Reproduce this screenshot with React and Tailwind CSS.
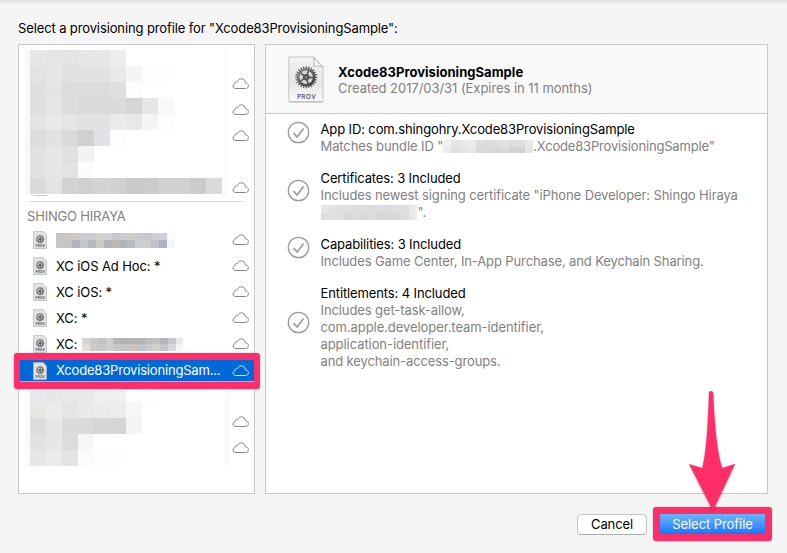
import React from "react";

const upperMosaic = [
  ["#e7e7e7", "#e5e5e5", "#e4e4e4", "#e6e6e6", "#e7e7e7", "#ededed"],
  ["#e3e3e3", "#e6e6e6", "#e1e1e1", "#e2e2e2", "#e2e2e2", "#e9e9e9", "#f5f5f5", "#fefefe", "#fefefe"],
  ["#dfdfdf", "#e4e4e4", "#dcdcdc", "#dcdcdb", "#dcdcdb", "#dfdfdf", "#fcfefe"],
  ["#dfdfdf", "#e5e5e5", "#dcdcdc", "#dadad9", "#dadad8", "#dbdbdb", "#d5d5d5", "#e6e6e6", "#f8fafa"],
  ["#e4e4e4", "#e9e9e9", "#e5e5e5", "#e2e2e2", "#e2e2e2", "#eaeae8", "#e8e8e8", "#f4f4f4", "#fdfdfd"],
  ["#dddddd", "#e2e2e0", "#d9d9d9", "#d0d0cf", "#e0e2e5", "#fdfdfd"],
  ["#e2e2e2", "#e6e6e6", "#e0e0e0", "#f2f2f2"],
  ["#e0e3e3", "#e7e7e7", "#e3e3e3", "#fcfcfc"],
  ["#dbdbdb", "#e4e4e1", "#d2d2d2", "#d0d0d0", "#d3d3d5", "#d1d1d1", "#cacaca", "#cbcbc9", "#d1d1d1", "#d1d1d1", "#cccccc", "#dbdbdb"],
];

const lowerMosaic = [
  ["#e8e9ee", "#e7e7e5", "#e9e9e9", "#e9e9e9", "#efefef", "#f0f0f0", "#fefefe", "#fdfdfd"],
  ["#e8e7e6", "#ebebea", "#e5e5e5", "#e9e9e9", "#ebebeb", "#ededed", "#f7f7f7"],
  ["#dddddd", "#e6e6e6", "#dbdbdb", "#dadad8", "#d6d6d6", "#d5d5d7", "#f4f4f4"],
  ["#e0e3e3", "#e7e7e7", "#dcdcdc", "#f6f6f6"],
  ["#e6e6e6", "#ebebeb", "#e4e4e4", "#fbfbfb", "#fefefe", "#fefefe"],
];

const nameBlur = [
  ["#c6c4c4", "#cbc8c7", "#cfc9c7", "#cccdd1", "#cdced2", "#d3d1ce", "#cfd1d4", "#c4c6ca", "#c9cbcd", "#cfcbc7", "#c8cacc", "#c6c8cd", "#cdced0", "#ced1d8", "#fafafd"],
  ["#c9c5c4", "#c5c5c6", "#b4b5ba", "#c4c6c8", "#b6b8bc", "#cac9c7", "#b2b4b7", "#bbb8b5", "#b2b4b8", "#b8bbbf", "#cccfd2", "#d0cfcd", "#c0c2c7", "#b0b2bb", "#f5f6fb"],
];
const xcBlur = [
  ["#d6d5d3", "#c8c9cc", "#c0c2c7", "#cfd0d4", "#b4b6bb", "#b0b2b6", "#b4b5b7", "#b0b2b6", "#babcc0", "#bfc1c5", "#b4b6ba", "#c7c9cc", "#e9e9eb"],
  ["#dfddda", "#cccac9", "#c8c9cb", "#d2d0ce", "#c6c7ca", "#c8c6c5", "#cdc4be", "#c0c2c6", "#c7c9cc", "#d0cfce", "#c3c5c8", "#d7d7da", "#f3f3f4"],
];
const bundleBlur = [
  ["#f0f0f0", "#e4e4e4", "#e8e8e8", "#ebebeb", "#dedede", "#dadada", "#dddddd", "#e2e2e2", "#dddddd", "#dfdfdf", "#e9e9e9"],
  ["#ececec", "#e0e0e0", "#e5e5e5", "#e7e7e7", "#d9d9d9", "#dadada", "#d7d7d7", "#dadada", "#d2d2d2", "#d3d3d3", "#e5e5e5"],
];
const certBlur = [
  ["#e8e8e8", "#e2e2e2", "#dfdfe0", "#e0e0e0", "#dcdcdc", "#dddddf", "#dbdbdb", "#dfdfdf", "#dcdcdc", "#dfdfdf", "#dedede", "#ebebeb"],
  ["#dddddd", "#e2e2e2", "#dfdfdf", "#d8d8d8", "#dadada", "#d8d8d8", "#dcdcdc", "#d6d6d6", "#d9d9d9", "#d8d8d8", "#dddddd", "#e9e9e9"],
];

function Mosaic({ rows, className }) {
  return (
    <div className={className} aria-hidden="true">
      {rows.map((row, r) => (
        <div key={r} className="flex h-4">
          {row.map((color, c) => (
            <i key={c} className="h-full w-4" style={{ backgroundColor: color }} />
          ))}
        </div>
      ))}
    </div>
  );
}

function Redacted({ rows, className }) {
  return (
    <span className={`inline-flex shrink-0 flex-col ${className}`} aria-hidden="true">
      {rows.map((row, r) => (
        <span key={r} className="flex flex-1">
          {row.map((color, c) => (
            <i key={c} className="flex-1" style={{ backgroundColor: color }} />
          ))}
        </span>
      ))}
    </span>
  );
}

function Cloud({ light }) {
  return (
    <svg
      className={`h-3 w-[17px] shrink-0 ${light ? "text-[#d6e6fa]" : "text-[#868686]"}`}
      viewBox="0 0 17 12"
      fill="none"
      stroke="currentColor"
      strokeWidth="1"
      strokeLinejoin="round"
    >
      <path d="M3.9 10.5 C2.1 10.5 1 9.5 1 8.1 C1 6.8 1.9 5.9 3.1 5.7 C2.7 4.2 4 3.1 5.5 3.6 C6.2 1.7 7.6 .8 9.3 .8 C11.7 .8 13.2 2.4 13.3 4.8 C15.3 4.9 16.4 6.1 16.4 7.7 C16.4 9.4 15.3 10.5 13.6 10.5 Z" />
    </svg>
  );
}

const teeth = Array.from({ length: 24 }, (_, i) => i * 15);
const spokes = [20, 92, 164, 236, 308];

function ProfileIcon({ className, small }) {
  return (
    <svg className={`shrink-0 ${className}`} viewBox="0 0 36 47">
      <defs>
        <linearGradient id="paper" x1="0" y1="0" x2="0" y2="1">
          <stop offset="0" stopColor="#f3f3f3" />
          <stop offset="0.6" stopColor="#e6e6e6" />
          <stop offset="1" stopColor="#fbfbfb" />
        </linearGradient>
        <linearGradient id="metal" x1="0" y1="0" x2="1" y2="1">
          <stop offset="0" stopColor="#8f8f8f" />
          <stop offset="1" stopColor="#333333" />
        </linearGradient>
      </defs>
      <path
        d="M.8 1 H25.5 L35 11.3 V45.6 H.8 Z"
        fill={small ? "#e2e2e2" : "url(#paper)"}
        stroke={small ? "#b4b4b4" : "#c6c6c6"}
        strokeWidth={small ? 1.8 : 1}
      />
      <path d="M1 46 H35" stroke="#b5b5b5" strokeWidth="1.2" />
      <g stroke="#666666" strokeWidth="1.4">
        {teeth.map((a) => (
          <path key={a} d="M18.2 10.3 V13" transform={`rotate(${a} 18.2 21.3)`} />
        ))}
      </g>
      <circle cx="18.2" cy="21.3" r="8" fill="#d9d9d9" stroke="url(#metal)" strokeWidth="2.6" />
      <g stroke="#5c5c5c" strokeWidth="1.7">
        {spokes.map((a) => (
          <path key={a} d="M18.2 21.3 V14" transform={`rotate(${a} 18.2 21.3)`} />
        ))}
      </g>
      <circle cx="18.2" cy="21.3" r="3.3" fill="#555555" />
      <circle cx="18.2" cy="21.3" r="1.3" fill="#7d7d7d" />
      <path d="M25.5 1 C26.6 4.5 26.4 8 25.2 10.4 C28 9.6 32 9.8 35 11.3 Z" fill="#fafafa" stroke="#a9a9a9" strokeWidth=".8" />
      <text
        x="18.2"
        y="42.6"
        textAnchor="middle"
        fontFamily="Open Sans, sans-serif"
        fontWeight={small ? "700" : "600"}
        fontSize={small ? "8" : "6.6"}
        textLength={small ? "24" : "18.6"}
        fill="#505050"
      >
        PROV
      </text>
    </svg>
  );
}

function Row({ children, selected, blank, noIcon }) {
  return (
    <div className="flex h-[26px] items-center pr-[5px] pl-[14px]">
      {!noIcon && <ProfileIcon small className="h-[18px] w-[14px]" />}
      <div
        className={`ml-[9px] flex min-w-0 flex-1 items-center whitespace-nowrap ${selected ? "text-white" : "text-black"}`}
      >
        {children}
      </div>
      {!blank && <Cloud light={selected} />}
    </div>
  );
}

function Check() {
  return (
    <svg
      className="mb-[11px] h-[23px] w-[23px] shrink-0 self-center text-[#9b9b9b]"
      viewBox="0 0 23 23"
      fill="none"
      stroke="currentColor"
    >
      <circle cx="11.5" cy="11.5" r="10.2" strokeWidth="1.3" />
      <path d="M6.5 12.2 L10.1 16 L16.6 7.4" strokeWidth="1.7" />
    </svg>
  );
}

function Detail({ title, children }) {
  return (
    <section className="flex gap-[11px]">
      <Check />
      <div className="text-[#818181]">
        <h3 className="tracking-[-0.12px] text-black">{title}</h3>
        {children}
      </div>
    </section>
  );
}

export default function App() {
  return (
    <main className="relative flex h-[553px] w-[787px] flex-col overflow-hidden bg-[#f5f5f5] font-['Inter',sans-serif] text-[13px] leading-[17px] whitespace-nowrap">
      <div className="h-1 shrink-0 bg-linear-to-b from-[#dedede] to-[#f5f5f5]" />
      <h1 className="mt-4 ml-[18px] h-6 shrink-0 leading-[17px] tracking-[-0.12px]">
        Select a provisioning profile for "Xcode83ProvisioningSample":
      </h1>

      <div className="flex h-[450px] shrink-0 gap-2.5 pr-[19px] pl-[18px]">
        <aside className="w-[237px] shrink-0 border border-[#c8c8c8] bg-white">
          <div className="relative h-[156px] pt-[26px]">
            <Row noIcon />
            <Row noIcon />
            <Row noIcon />
            <Row noIcon blank />
            <Row noIcon />
            <Mosaic
              rows={upperMosaic}
              className="absolute top-[5px] left-[6px] h-[145px] w-[202px] border-r-[3px] border-l-[5px] border-[#f9f9f9]"
            />
            <div className="absolute top-[150px] left-[14px] h-px w-[14px] bg-[#c4c4c4]" />
          </div>
          <div className="mr-2.5 ml-2.5 h-px bg-[#dcdcdc]" />
          <h2 className="mt-1.5 ml-2 h-[19px] leading-[17px] tracking-[-0.18px] text-[#818181]">SHINGO HIRAYA</h2>
          <Row>
            <Redacted rows={nameBlur} className="h-[15px] w-[119px]" />
          </Row>
          <Row>
            <span className="tracking-[-0.1px]">XC iOS Ad Hoc: *</span>
          </Row>
          <Row>
            <span className="tracking-[-0.1px]">XC iOS: *</span>
          </Row>
          <Row>
            <span className="tracking-[-0.1px]">XC: *</span>
          </Row>
          <Row>
            <span className="tracking-[-0.1px]">XC:</span>
            <Redacted rows={xcBlur} className="ml-[5px] h-[13px] w-[101px]" />
          </Row>
          <div className="-mt-1 -mr-1.5 -mb-1.5 -ml-[5px] h-9 rounded-[3px] bg-[#ff2e68] px-[6px] py-[7px] shadow-[0_0_2px_rgba(0,0,0,0.25)]">
            <div className="flex h-[22px] items-center border-b border-[#9dbbe0] bg-[#0069d9]">
              <div className="-ml-px w-[235px]">
                <Row selected>
                  <span className="tracking-[-0.18px]">Xcode83ProvisioningSam...</span>
                </Row>
              </div>
            </div>
          </div>
          <div className="relative h-[104px] pt-[26px]">
            <Row noIcon />
            <Row noIcon />
            <Mosaic
              rows={lowerMosaic}
              className="absolute top-[3px] left-[6px] h-[80px] w-[205px] border-r-[5px] border-l-[5px] border-[#fafafa] [clip-path:inset(4px_0_0_0)]"
            />
          </div>
        </aside>

        <section className="flex-1 border border-[#c8c8c8] bg-white">
          <header className="flex h-[69px] items-center gap-[14px] border-b border-[#c8c8c8] bg-[#f9f9f9] pl-[22px]">
            <ProfileIcon className="h-[47px] w-9" />
            <div className="mt-px leading-[16px]">
              <h2 className="font-bold tracking-[0.04px] text-black">Xcode83ProvisioningSample</h2>
              <p className="tracking-[-0.05px] text-[#818181]">Created 2017/03/31 (Expires in 11 months)</p>
            </div>
          </header>
          <div className="flex flex-col gap-[15px] pt-[7px] pl-[20.5px]">
            <Detail title="App ID: com.shingohry.Xcode83ProvisioningSample">
              <p className="flex items-center">
                <span className="tracking-[-0.1px]">Matches bundle ID "</span>
                <Redacted rows={bundleBlur} className="h-[13px] w-[90px]" />
                <span className="tracking-[-0.17px]">.Xcode83ProvisioningSample"</span>
              </p>
            </Detail>
            <Detail title="Certificates: 3 Included">
              <p className="tracking-[-0.11px]">Includes newest signing certificate "iPhone Developer: Shingo Hiraya</p>
              <p className="flex items-center">
                <Redacted rows={certBlur} className="h-[15px] w-[97px]" />
                <span>".</span>
              </p>
            </Detail>
            <Detail title="Capabilities: 3 Included">
              <p className="tracking-[-0.12px]">Includes Game Center, In-App Purchase, and Keychain Sharing.</p>
            </Detail>
            <Detail title="Entitlements: 4 Included">
              <p className="tracking-[-0.1px]">Includes get-task-allow,</p>
              <p className="tracking-[-0.07px]">com.apple.developer.team-identifier,</p>
              <p className="tracking-[-0.07px]">application-identifier,</p>
              <p className="tracking-[-0.12px]">and keychain-access-groups.</p>
            </Detail>
          </div>
        </section>
      </div>

      <footer className="mt-[13px] flex items-center justify-end gap-1.5 pr-[15px]">
        <button className="h-[21px] w-[70px] rounded-[4px] border border-[#c6c6c6] border-b-[#adadad] bg-white leading-[18px] tracking-[-0.1px] text-black">
          Cancel
        </button>
        <div className="rounded-[3px] bg-[#ff2e68] p-[7px] shadow-[0_0_2px_rgba(0,0,0,0.25)]">
          <button className="block h-[20px] w-[105px] bg-linear-to-b from-[#6cb4fb] to-[#0a79fd] leading-[19px] tracking-[-0.07px] text-white">
            Select Profile
          </button>
        </div>
      </footer>

      <svg className="absolute top-[386px] left-[682px] drop-shadow-[0_1px_1px_rgba(0,0,0,0.3)]" width="60" height="130" viewBox="682 386 60 130">
        <path
          d="M709 393 Q709 391 711 391 Q713 391 713.2 393 C714.5 420 716.5 450 722.3 468 L735.2 463.7 L713 511 L689 464 L702.3 468 C706.8 450 708 420 709 393 Z"
          fill="#ff2e68"
        />
      </svg>
    </main>
  );
}
